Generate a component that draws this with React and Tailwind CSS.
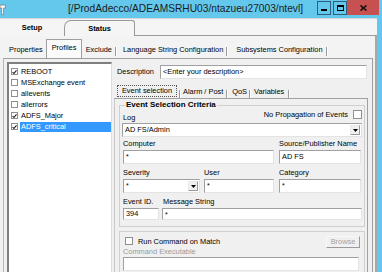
import React from "react";

const sunken =
  "bg-white border border-t-[#a0a0a0] border-l-[#a0a0a0] border-r-[#e3e3e3] border-b-[#e3e3e3]";

function Input({ className = "", children }) {
  return (
    <div className={`${sunken} flex items-center pl-[2px] ${className}`}>
      {children}
    </div>
  );
}

function Star({ className = "", wide }) {
  return (
    <div className={`${sunken} flex items-start pl-[2px] pt-[2px] ${className}`}>
      <span className="text-[7px] leading-none">*</span>
    </div>
  );
}

function DropBtn() {
  return (
    <span className="w-[10px] h-[10px] mr-[1px] bg-[#f0f0f0] border border-t-[#e8e8e8] border-l-[#e8e8e8] border-r-[#9a9a9a] border-b-[#9a9a9a] flex items-center justify-center">
      <svg width="5" height="3" viewBox="0 0 5 3">
        <path d="M0 0h5L2.5 3z" fill="#000" />
      </svg>
    </span>
  );
}

function Check({ checked, size = "w-[8px] h-[8px]" }) {
  return (
    <span className={`${size} shrink-0 border border-[#8e8f8f] bg-white flex items-center justify-center`}>
      {checked && (
        <svg width="6" height="6" viewBox="0 0 6 6">
          <path d="M0.6 3 L2.3 4.8 L5.4 1.1" stroke="#1a1a1a" strokeWidth="1.3" fill="none" />
        </svg>
      )}
    </span>
  );
}

function Sep() {
  return <span className="w-[2px] h-[14px] border-l border-l-[#9a9a9a] border-r border-r-white" />;
}

function TitleBar() {
  return (
    <div className="h-[18px] flex items-start">
      <div className="w-[6px] h-[18px] flex items-center">
        <svg width="6" height="11" viewBox="0 0 6 11">
          <path d="M0 1h5.5v3H3.6v6.5H1.6V4H0z" fill="#f6f6f6" stroke="#6a6a6a" strokeWidth="0.6" />
        </svg>
      </div>
      <div className="ml-[62px] h-[18px] flex items-center text-[10.2px] text-[#1c1c1c]">
        [/ProdAdecco/ADEAMSRHU03/ntazueu27003/ntevl]
      </div>
      <div className="flex-1" />
      <div className="flex items-start mr-[3px]">
        <div className="w-[14px] h-[14px] mt-[1px] border border-[#2f5f7f] flex items-center justify-center">
          <span className="w-[6px] h-[2px] bg-black mt-[3px]" />
        </div>
        <div className="w-[14px] h-[14px] mt-[1px] ml-[2px] border border-[#2f5f7f] flex items-center justify-center">
          <span className="w-[7px] h-[6px] border border-black border-t-2" />
        </div>
        <div className="w-[32px] h-[15px] bg-[#c75050] flex items-center justify-center">
          <svg width="7" height="6" viewBox="0 0 7 6">
            <path d="M0.5 0.5L6.5 5.5M6.5 0.5L0.5 5.5" stroke="#111" strokeWidth="1.6" />
          </svg>
        </div>
      </div>
    </div>
  );
}

function MainTabs() {
  return (
    <div className="h-[18px] flex items-end bg-[#f5f5f5] border-t border-t-[#d6d6d6]">
      <div className="w-[64px] h-[17px] flex items-center justify-center font-bold">Setup</div>
      <div className="w-[71px] h-[16px] border border-b-0 border-[#9a9a9a] rounded-tl-[7px] rounded-tr-[3px] flex items-center justify-center font-bold bg-[#f5f5f5]">
        Status
      </div>
      <div className="flex-1 self-stretch border-b border-b-[#9a9a9a]" />
    </div>
  );
}

function SubTabs() {
  return (
    <div className="h-[22px] flex items-end bg-[#f3f3f3]">
      <span className="ml-[9px] mb-[5px]">Properties</span>
      <div className="ml-[3px] w-[36px] h-[19px] bg-[#fafafa] border-l border-r border-t border-[#a0a0a0] flex items-center pl-[5px] pb-[2px]">
        Profiles
      </div>
      <span className="ml-[4px] mb-[5px]">Exclude</span>
      <span className="ml-[3px] mb-[3px]"><Sep /></span>
      <span className="ml-[6px] mb-[5px]">Language String Configuration</span>
      <span className="ml-[3px] mb-[3px]"><Sep /></span>
      <span className="ml-[8px] mb-[5px]">Subsystems Configuration</span>
      <span className="ml-[3px] mb-[3px]"><Sep /></span>
    </div>
  );
}

const items = [
  ["REBOOT", true],
  ["MSExchange event", false],
  ["allevents", false],
  ["allerrors", false],
  ["ADFS_Major", true],
  ["ADFS_critical", true, true],
];

function ListBox() {
  return (
    <div className="ml-[3px] mt-[3px] w-[105px] h-[230px] bg-white border-t-2 border-l-2 border-t-[#7f7f7f] border-l-[#7f7f7f] border-r border-r-[#dcdcdc] pt-[2px] flex flex-col">
      {items.map(([name, checked, sel]) => (
        <div key={name} className="h-[11px] flex items-center">
          <span className="ml-[2px]"><Check checked={checked} size="w-[7px] h-[7px]" /></span>
          <span
            className={
              sel
                ? "ml-[2px] flex-1 h-[10px] flex items-center pl-[1px] bg-[#3399ff] text-white"
                : "ml-[2px] flex-1 h-[10px] flex items-center pl-[1px]"
            }
          >
            {name}
          </span>
        </div>
      ))}
    </div>
  );
}

function InnerTabs() {
  return (
    <div className="mt-[5px] h-[14px] flex items-end">
      <div className="ml-[2px] h-[14px] w-[62px] flex items-center justify-center">
        <span className="h-[12px] w-[60px] border border-dotted border-[#555] flex items-center justify-center">
          Event selection
        </span>
      </div>
      <span className="ml-[1px] mb-[0px]"><Sep /></span>
      <span className="ml-[2px] mb-[3px]">Alarm / Post</span>
      <span className="ml-[3px]"><Sep /></span>
      <span className="ml-[4px] mb-[3px]">QoS</span>
      <span className="ml-[2px]"><Sep /></span>
      <span className="ml-[3px] mb-[3px]">Variables</span>
      <span className="ml-[4px]"><Sep /></span>
    </div>
  );
}

function Criteria() {
  return (
    <fieldset className="mt-[2px] ml-[4px] mr-[2px] border border-[#cfcfcf] pb-[6px]">
      <legend className="ml-[5px] px-[1px] font-bold text-[8px] leading-[8px]">Event Selection Criteria</legend>
      <div className="h-[13px] flex justify-between">
        <span className="self-end ml-[3px] leading-[8px]">Log</span>
        <div className="self-start mt-[1px] mr-[2px] flex items-center">
          <span className="mr-[5px]">No Propagation of Events</span>
          <Check size="w-[9px] h-[9px]" />
        </div>
      </div>
      <div className={`${sunken} mt-[1px] ml-[2px] mr-[2px] h-[14px] flex items-center justify-between`}>
        <span className="pl-[2px]">AD FS/Admin</span>
        <DropBtn />
      </div>

      <div className="mt-[3px] h-[8px] flex items-center">
        <span className="ml-[3px] w-[156px]">Computer</span>
        <span>Source/Publisher Name</span>
      </div>
      <div className="mt-[2px] h-[14px] flex">
        <Star className="ml-[3px] w-[151px]" />
        <Input className="ml-[5px] w-[82px]">AD FS</Input>
      </div>

      <div className="mt-[5px] h-[8px] flex items-center">
        <span className="ml-[3px] w-[81px]">Severity</span>
        <span className="w-[75px]">User</span>
        <span>Category</span>
      </div>
      <div className="mt-[2px] h-[14px] flex">
        <div className={`${sunken} ml-[3px] w-[77px] flex items-start justify-between`}>
          <span className="pl-[2px] pt-[2px] text-[7px] leading-none">*</span>
          <span className="self-center"><DropBtn /></span>
        </div>
        <Star className="ml-[4px] w-[70px]" />
        <Star className="ml-[5px] w-[82px]" />
      </div>

      <div className="mt-[5px] h-[8px] flex items-center">
        <span className="ml-[3px] w-[40px]">Event ID.</span>
        <span>Message String</span>
      </div>
      <div className="mt-[2px] h-[12px] flex">
        <Input className="ml-[3px] w-[36px]">394</Input>
        <Star className="ml-[3px] w-[200px]" />
      </div>
    </fieldset>
  );
}

function RunCommand() {
  return (
    <div className="mt-[4px] ml-[4px] mr-[2px] border border-[#cfcfcf] h-[60px] flex flex-col">
      <div className="mt-[4px] h-[12px] flex items-start">
        <span className="ml-[5px] mt-[1px]"><Check size="w-[8px] h-[8px]" /></span>
        <span className="ml-[5px] mt-[2px]">Run Command on Match</span>
        <div className="flex-1" />
        <div className="mr-[4px] w-[34px] h-[12px] bg-[#f0f0f0] border border-t-[#f8f8f8] border-l-[#f8f8f8] border-r-[#9a9a9a] border-b-[#9a9a9a] flex items-center justify-center text-[#a3a3a3]">
          Browse
        </div>
      </div>
      <div className="h-[8px] ml-[3px] flex items-center text-[#9a9a9a]">Command Executable</div>
      <div className={`${sunken} mt-[1px] ml-[3px] mr-[5px] h-[14px]`} />
    </div>
  );
}

function RightPane() {
  return (
    <div className="ml-[2px] w-[254px] flex flex-col">
      <div className="mt-[6px] h-[14px] flex items-center">
        <span className="ml-[3px] w-[43px]">Description</span>
        <Input className="flex-1 h-[14px] mr-[1px]">&lt;Enter your description&gt;</Input>
      </div>
      <InnerTabs />
      <div className="h-[200px] border-t border-l border-r border-t-[#a0a0a0] border-l-[#c8c8c8] border-r-[#a0a0a0] flex flex-col">
        <Criteria />
        <RunCommand />
      </div>
    </div>
  );
}

export default function App() {
  return (
    <div className="w-[382px] h-[272px] overflow-hidden bg-[#64c8ec] font-['Liberation_Sans',Arial,sans-serif] text-[7.4px] leading-none text-black">
      <TitleBar />
      <div className="w-[377px] h-[260px] bg-[#f0f0f0] flex flex-col">
        <MainTabs />
        <div className="flex-1 flex flex-col border-r-2 border-r-[#a8a8a8]">
          <SubTabs />
          <div className="ml-[3px] mr-[2px] flex-1 flex border-t border-l border-r border-t-[#a0a0a0] border-l-[#b8b8b8] border-r-[#a0a0a0]">
            <ListBox />
            <RightPane />
          </div>
        </div>
      </div>
    </div>
  );
}
